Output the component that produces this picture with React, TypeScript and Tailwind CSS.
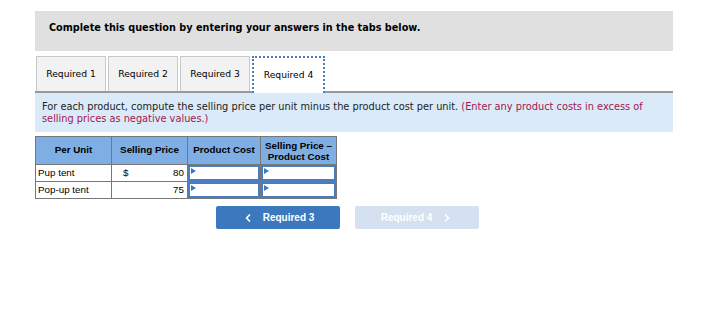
import { ChevronLeft, ChevronRight } from 'lucide-react';

const tabs = ['Required 1', 'Required 2', 'Required 3', 'Required 4'];

const rows = [
  { name: 'Pup tent', dollar: true, price: '80' },
  { name: 'Pop-up tent', dollar: false, price: '75' },
];

const Marker = () => (
  <span className="absolute left-[1px] top-[1px] w-0 h-0 border-t-[3px] border-b-[3px] border-l-[5px] border-t-transparent border-b-transparent border-l-[#3b78c4]" />
);

export default function App() {
  return (
    <div className="w-[723px] h-[328px] bg-white pt-[11px] pl-[35px] font-['DejaVu_Sans',Verdana,sans-serif] text-[#222]">
      <div className="w-[638px] h-[40px] bg-[#e0e0e0] flex items-center pl-[14px] pb-[5px] text-[9.7px] font-bold text-black">
        Complete this question by entering your answers in the tabs below.
      </div>

      {/* tabs */}
      <div className="mt-[5px] w-[638px] flex items-end border-b-2 border-[#999] h-[37px] pl-[1px]">
        {tabs.map((t, i) =>
          i === 3 ? (
            <div
              key={t}
              className="w-[73px] h-[37px] -mb-[2px] pb-[2px] bg-white border-2 border-b-0 border-dotted border-[#4a7cc0] flex items-center justify-center text-[9.2px] text-black"
            >
              {t}
            </div>
          ) : (
            <div
              key={t}
              className="w-[70px] h-[35px] mr-[2px] bg-[#f2f2f2] border border-b-0 border-[#c8c8c8] flex items-center justify-center text-[9.2px] text-black"
            >
              {t}
            </div>
          )
        )}
      </div>

      <div className="w-[638px] h-[39px] bg-[#dbeaf8] px-[7px] pt-[8px] text-[9.8px] leading-[12px] text-[#222]">
        For each product, compute the selling price per unit minus the product cost per unit.{' '}
        <span className="text-[#a3164f]">(Enter any product costs in excess of selling prices as negative values.)</span>
      </div>

      {/* table */}
      <table className="mt-[4px] border-collapse font-['Liberation_Sans',Arial,sans-serif] text-[9.8px] text-black">
        <thead>
          <tr className="h-[28px] bg-[#7eaee3]">
            <th className="w-[76px] border border-[#777] font-bold">Per Unit</th>
            <th className="w-[76px] border border-[#777] font-bold">Selling Price</th>
            <th className="w-[73px] border border-[#777] font-bold">Product Cost</th>
            <th className="w-[76px] border border-[#777] font-bold leading-[11px]">
              Selling Price –<br />Product Cost
            </th>
          </tr>
        </thead>
        <tbody>
          {rows.map((r) => (
            <tr key={r.name} className="h-[17px]">
              <td className="border border-[#777] pl-[2px] text-left">{r.name}</td>
              <td className="border border-[#777] px-[3px]">
                <div className="flex justify-between">
                  <span className="pl-[8px]">{r.dollar ? '$' : ''}</span>
                  <span>{r.price}</span>
                </div>
              </td>
              <td className="border border-[#777] p-0">
                <div className="relative h-[16px] border-2 border-[#4a7cc0] bg-white">
                  <Marker />
                </div>
              </td>
              <td className="border border-[#777] p-0">
                <div className="relative h-[16px] border-2 border-[#4a7cc0] bg-white">
                  <Marker />
                </div>
              </td>
            </tr>
          ))}
        </tbody>
      </table>

      {/* nav buttons */}
      <div className="mt-[7px] ml-[181px] flex gap-[15px] font-['Liberation_Sans',Arial,sans-serif] text-[10px] font-bold">
        <button className="w-[124px] h-[23px] rounded-[2px] bg-[#3b78bd] text-white flex items-center justify-center gap-[9px]">
          <ChevronLeft size={12} strokeWidth={3.5} />
          Required 3
        </button>
        <button className="w-[124px] h-[23px] rounded-[2px] bg-[#d5e1f0] text-white flex items-center justify-center gap-[9px]">
          Required 4
          <ChevronRight size={12} strokeWidth={3.5} />
        </button>
      </div>
    </div>
  );
}
